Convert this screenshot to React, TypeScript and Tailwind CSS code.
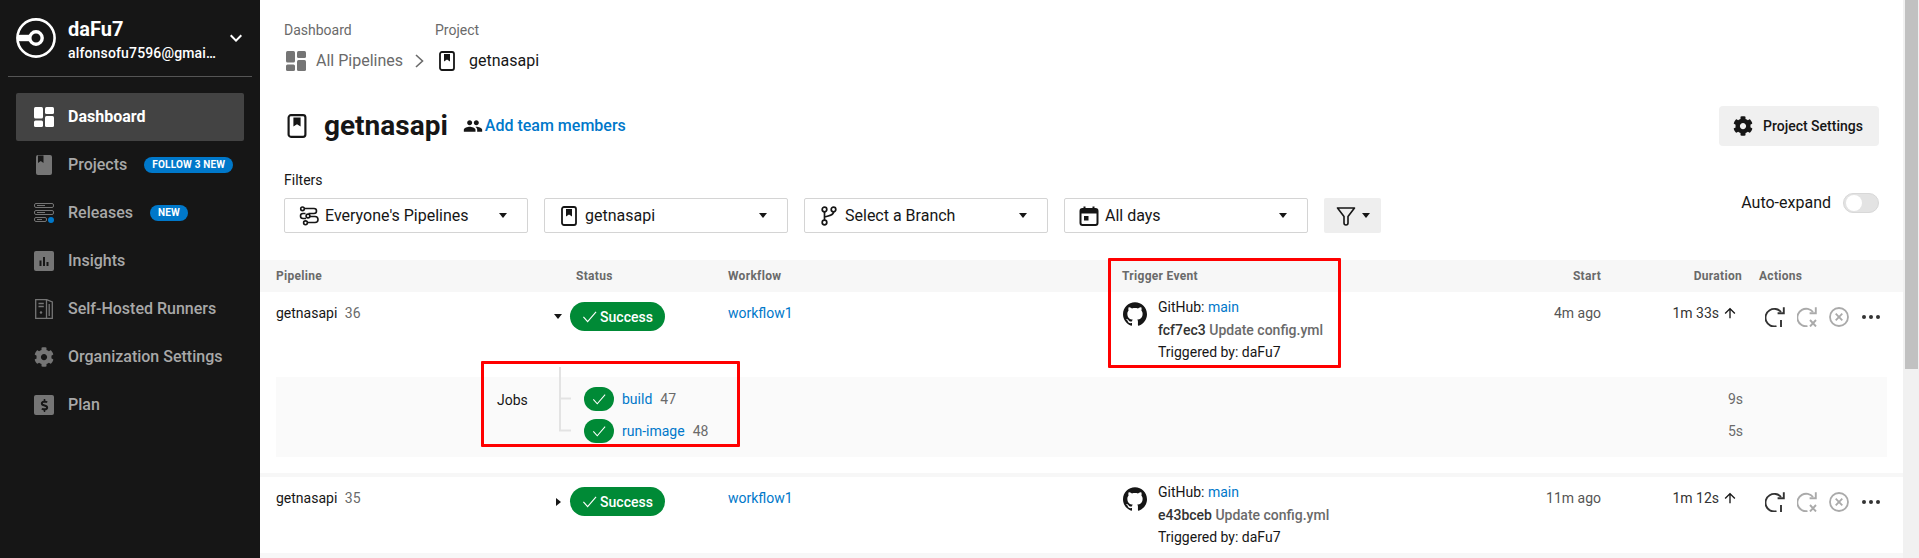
import React from "react";
import { FaCog, FaDollarSign } from "react-icons/fa";
import { MdPeople, MdArrowUpward, MdKeyboardArrowDown } from "react-icons/md";
import { SiGithub } from "react-icons/si";

const Logo = () => (
  <svg width="40" height="40" viewBox="0 0 40 40" fill="none" stroke="white">
    <circle cx="20" cy="20" r="18.6" strokeWidth="2.6" />
    <circle cx="20" cy="20" r="6.2" strokeWidth="3.4" />
    <path d="M2 20H15" strokeWidth="6.4" />
  </svg>
);

const DashIcon = ({ c }: { c: string }) => (
  <svg width="20" height="20" viewBox="0 0 20 20" fill={c}>
    <rect x="0" y="0" width="9" height="11.5" rx="1.5" />
    <rect x="11" y="0" width="9" height="7" rx="1.5" />
    <rect x="0" y="13.5" width="9" height="6.5" rx="1.5" />
    <rect x="11" y="9" width="9" height="11" rx="1.5" />
  </svg>
);

const BookSolid = () => (
  <svg width="20" height="20" viewBox="0 0 20 20">
    <rect x="2" y="0" width="16" height="20" rx="2" fill="#757575" />
    <path d="M4 0.5H9.5V8L6.75 6L4 8Z" fill="#161616" />
  </svg>
);

const BookOutline = ({ s = 20 }: { s?: number }) => (
  <svg width={s} height={s} viewBox="0 0 20 20" fill="none">
    <rect x="3" y="1" width="14" height="18" rx="2" stroke="#161616" strokeWidth="1.8" />
    <path d="M7 3H13V10.5L10 8.5L7 10.5Z" fill="#161616" />
  </svg>
);

const ReleaseIcon = () => (
  <svg width="20" height="20" viewBox="0 0 20 20" fill="none">
    <rect x="0.5" y="0.5" width="19" height="4" rx="1.5" stroke="#757575" />
    <rect x="0.5" y="7.5" width="19" height="4" rx="1.5" stroke="#757575" />
    <rect x="0.5" y="14.5" width="12" height="4" rx="1.5" stroke="#757575" />
    <path d="M3 2.5H11M3 9.5H11M3 16.5H8" stroke="#757575" />
    <circle cx="17" cy="17" r="3" fill="#0078ca" />
  </svg>
);

const InsightsIcon = () => (
  <svg width="20" height="20" viewBox="0 0 20 20">
    <rect width="20" height="20" rx="2" fill="#757575" />
    <path d="M5.5 9.5H7.5V15H5.5ZM9 6H11V15H9ZM12.5 11H14.5V15H12.5Z" fill="#161616" />
  </svg>
);

const RunnerIcon = () => (
  <svg width="20" height="20" viewBox="0 0 20 20" fill="none" stroke="#757575" strokeWidth="1.3">
    <path d="M1.7 0.7H12.5V19.3H1.7Z" />
    <path d="M12.5 0.7L18.3 3V19.3H12.5" />
    <path d="M4.5 4.5H9.8M4.5 7.5H9.8" />
    <path d="M15.2 5V17" />
    <circle cx="7" cy="13.5" r="1.2" fill="#757575" stroke="none" />
  </svg>
);

const PlanIcon = () => (
  <span className="flex h-5 w-5 items-center justify-center rounded-[2px] bg-[#757575] text-[#161616]">
    <FaDollarSign size={13} />
  </span>
);

const PipelinesIcon = () => (
  <svg width="20" height="20" viewBox="0 0 20 20" fill="none" stroke="#161616" strokeWidth="1.6">
    <path d="M5 2.5H15A2.5 2.5 0 0 1 15 7.5H9.5M6.5 7.5H4A2.5 2.5 0 0 0 4 12.5H7M11 10.5H16A3 3 0 0 1 16 16.5H8M5 16.5H4" />
    <circle cx="3.5" cy="2.8" r="1.8" />
    <circle cx="9" cy="10" r="1.9" />
    <circle cx="6.5" cy="16.8" r="1.9" />
  </svg>
);

const BranchIcon = () => (
  <svg width="20" height="20" viewBox="0 0 20 20" fill="none" stroke="#161616" strokeWidth="1.7">
    <circle cx="5.5" cy="3.5" r="2.3" />
    <circle cx="14.5" cy="3.5" r="2.3" />
    <circle cx="5.5" cy="16.5" r="2.3" />
    <path d="M5.5 6V14M14.5 6C14.5 9 10 10 5.5 11" />
  </svg>
);

const CalendarIcon = () => (
  <svg width="20" height="20" viewBox="0 0 20 20" fill="none">
    <rect x="1.5" y="3" width="17" height="16" rx="2" stroke="#161616" strokeWidth="2" />
    <path d="M1.5 3H18.5V7.5H1.5Z" fill="#161616" />
    <path d="M5.5 0.5V4M14.5 0.5V4" stroke="#161616" strokeWidth="2" />
    <rect x="5" y="10" width="4.5" height="4.5" fill="#161616" />
  </svg>
);

const Funnel = () => (
  <svg width="20" height="20" viewBox="0 0 20 20" fill="none" stroke="#161616" strokeWidth="1.6" strokeLinejoin="round">
    <path d="M1.5 2H18.5L12 10.5V17A1.5 1.5 0 0 1 8 17V10.5Z" />
  </svg>
);

const Caret = () => (
  <span className="block h-0 w-0 border-x-[4.5px] border-t-[5px] border-x-transparent border-t-[#161616]" />
);

const Retry = ({ c }: { c: string }) => (
  <svg width="20" height="20" viewBox="0 0 20 20" fill="none" stroke={c} strokeWidth="1.9">
    <path d="M16 5A8.8 8.8 0 1 0 11.5 19.2" />
    <path d="M18.8 0.2V6.2H12.6" />
    <path d="M16 13V20" />
  </svg>
);

const RerunFailed = () => (
  <svg width="20" height="20" viewBox="0 0 20 20" fill="none" stroke="#aaaaaa" strokeWidth="1.9">
    <path d="M16 5A8.8 8.8 0 1 0 10.5 19.2" />
    <path d="M18.8 0.2V6.2H12.6" />
    <path d="M13 13L19 19.5M19 13L13 19.5" />
  </svg>
);

const Cancel = () => (
  <svg width="20" height="20" viewBox="0 0 20 20" fill="none" stroke="#aaaaaa" strokeWidth="1.8">
    <circle cx="10" cy="10" r="9" />
    <path d="M6.7 6.7L13.3 13.3M13.3 6.7L6.7 13.3" />
  </svg>
);

const Dots = () => (
  <svg width="18" height="4" viewBox="0 0 18 4" fill="#333333">
    <circle cx="2" cy="2" r="2" />
    <circle cx="9" cy="2" r="2" />
    <circle cx="16" cy="2" r="2" />
  </svg>
);

const Thin = ({ s }: { s: number }) => (
  <svg width={s} height={s} viewBox="0 0 16 16" fill="none" stroke="white" strokeWidth="1.2">
    <path d="M1.5 8.5L6 13.5L15 3" />
  </svg>
);

const nav: { label: string; icon: React.ReactNode; badge?: string; active?: boolean }[] = [
  { label: "Dashboard", icon: <DashIcon c="#ffffff" />, active: true },
  { label: "Projects", icon: <BookSolid />, badge: "FOLLOW 3 NEW" },
  { label: "Releases", icon: <ReleaseIcon />, badge: "NEW" },
  { label: "Insights", icon: <InsightsIcon /> },
  { label: "Self-Hosted Runners", icon: <RunnerIcon /> },
  { label: "Organization Settings", icon: <FaCog size={20} color="#757575" /> },
  { label: "Plan", icon: <PlanIcon /> },
];

const Sidebar = () => (
  <aside className="flex w-[260px] shrink-0 flex-col bg-[#161616]">
    <div className="flex h-[76px] items-start pl-4 pt-[18px]">
      <Logo />
      <div className="ml-3 mt-[1px] w-[148px]">
        <div className="text-[20px] leading-[20px] font-bold text-white">daFu7</div>
        <div className="mt-[5px] truncate text-[14px] leading-[18px] font-medium tracking-[0.15px] text-white">
          alfonsofu7596@gmail.com
        </div>
      </div>
      <MdKeyboardArrowDown size={24} color="#ffffff" className="ml-2 mt-2" />
    </div>
    <div className="mx-2 h-px bg-[#555555]" />
    <nav className="mt-4 flex flex-col px-4">
      {nav.map((n) => (
        <div
          key={n.label}
          className={`flex h-12 items-center gap-[14px] rounded-[2px] pl-[18px] text-[16px] ${
            n.active ? "bg-[#434343] font-bold text-white" : "font-medium text-[#a8a8a8]"
          }`}
        >
          {n.icon}
          <span>{n.label}</span>
          {n.badge && (
            <span className="ml-[3px] whitespace-nowrap rounded-full bg-[#0078ca] px-2 text-[10px] leading-[16px] font-bold tracking-[0.2px] text-white">
              {n.badge}
            </span>
          )}
        </div>
      ))}
    </nav>
  </aside>
);

const FilterBox = ({ icon, label }: { icon: React.ReactNode; label: string }) => (
  <div className="flex h-[35px] w-[244px] items-center rounded-[2px] border border-[#d4d4d4] pl-[14px] pr-5 text-[16px] text-[#161616]">
    {icon}
    <span className="ml-[6px]">{label}</span>
    <span className="ml-auto flex">
      <Caret />
    </span>
  </div>
);

const rowGrid = "grid grid-cols-[272px_180px_394px_320px_159px_141px_1fr] px-4";

const Row = ({
  num,
  open,
  hash,
  start,
  dur,
}: {
  num: string;
  open: boolean;
  hash: string;
  start: string;
  dur: string;
}) => (
  <div className={`${rowGrid} text-[14px] leading-5 text-[#161616]`}>
    <div className="pt-[11px]">
      getnasapi <span className="ml-1 text-[#6a6a6a]">{num}</span>
    </div>
    <div className="flex items-start pt-[10px]">
      <span className="flex h-[29px] w-5 items-center justify-center">
        {open ? (
          <span className="h-0 w-0 border-x-[4.5px] border-t-[5px] border-x-transparent border-t-[#161616]" />
        ) : (
          <span className="h-0 w-0 border-y-[4.5px] border-l-[5px] border-y-transparent border-l-[#161616]" />
        )}
      </span>
      <span className="ml-[2px] flex h-[29px] w-[95px] items-center justify-center gap-[3px] rounded-full bg-[#008a36] font-medium text-white">
        <Thin s={15} />
        Success
      </span>
    </div>
    <div className="pt-[11px] text-[#0078ca]">workflow1</div>
    <div className="flex items-start pl-[1px] pt-[10px]">
      <SiGithub size={24} color="#161616" />
      <div className="ml-[11px] -mt-[6px] leading-[22.5px]">
        <div>
          GitHub: <span className="text-[#0078ca]">main</span>
        </div>
        <div className="font-medium text-[#333333]">
          {hash} <span className="text-[#6a6a6a]">Update config.yml</span>
        </div>
        <div>Triggered by: daFu7</div>
      </div>
    </div>
    <div className="pt-[11px] text-right text-[#555555]">{start}</div>
    <div className="pt-[11px] pr-1 text-[#333333]">
      <div className="flex items-center justify-end gap-[3px]">
        <span>{dur}</span>
        <MdArrowUpward size={16} color="#161616" />
      </div>
    </div>
    <div className="flex items-center gap-3 self-start pl-[23px] pt-[15px]">
      <Retry c="#333333" />
      <RerunFailed />
      <Cancel />
      <span className="ml-[1px] flex">
        <Dots />
      </span>
    </div>
  </div>
);

const Job = ({ name, num, dur }: { name: string; num: string; dur: string }) => (
  <div className="flex h-6 items-center text-[14px]">
    <span className="flex h-6 w-[30px] items-center justify-center rounded-full bg-[#008a36]">
      <Thin s={14} />
    </span>
    <span className="ml-2 text-[#0078ca]">{name}</span>
    <span className="ml-2 text-[#6a6a6a]">{num}</span>
    <span className="ml-auto pr-[144px] text-[#6a6a6a]">{dur}</span>
  </div>
);

const Main = () => (
  <main className="relative min-w-0 flex-1 overflow-hidden">
    <div className="px-6 pt-5">
      <div className="grid grid-cols-[151px_auto] text-[14px] leading-5 text-[#6a6a6a]">
        <span>Dashboard</span>
        <span>Project</span>
      </div>
      <div className="mt-[9px] flex h-6 items-center text-[16px]">
        <span className="ml-[2px]">
          <DashIcon c="#757575" />
        </span>
        <span className="ml-[10px] text-[#6a6a6a]">All Pipelines</span>
        <svg width="9" height="14" viewBox="0 0 9 14" fill="none" stroke="#6a6a6a" strokeWidth="1.6" className="ml-[12px]">
          <path d="M1 1L7.5 7L1 13" />
        </svg>
        <span className="ml-[13px]">
          <BookOutline />
        </span>
        <span className="ml-[12px] text-[#161616]">getnasapi</span>
      </div>
      <div className="mt-[33px] flex h-10 items-center">
        <span className="ml-[1px]">
          <BookOutline s={24} />
        </span>
        <h1 className="ml-[15px] text-[28px] font-bold text-[#161616]">getnasapi</h1>
        <MdPeople size={20} color="#161616" className="ml-[15px]" />
        <span className="ml-[2px] text-[16px] font-medium text-[#0078ca]">Add team members</span>
        <button className="ml-auto flex h-10 w-40 items-center rounded-[4px] bg-[#f0f0f0] pl-[14px] text-[14px] font-medium text-[#161616]">
          <FaCog size={20} color="#161616" />
          <span className="ml-[10px]">Project Settings</span>
        </button>
      </div>
      <div className="mt-6 flex items-start justify-between">
        <div>
          <div className="text-[14px] leading-5 text-[#161616]">Filters</div>
          <div className="mt-2 flex gap-4">
            <FilterBox icon={<PipelinesIcon />} label="Everyone's Pipelines" />
            <FilterBox icon={<BookOutline />} label="getnasapi" />
            <FilterBox icon={<BranchIcon />} label="Select a Branch" />
            <FilterBox icon={<CalendarIcon />} label="All days" />
            <button className="flex h-[35px] w-[57px] items-center justify-center gap-[6px] rounded-[2px] bg-[#eeeeee]">
              <Funnel />
              <Caret />
            </button>
          </div>
        </div>
        <div className="mt-[23px] flex h-5 items-center gap-3">
          <span className="text-[16px] text-[#161616]">Auto-expand</span>
          <span className="flex h-5 w-9 items-center rounded-full border border-[#d8d8d8] bg-[#e3e3e3] pl-[2px]">
            <span className="h-4 w-4 rounded-full bg-white" />
          </span>
        </div>
      </div>
    </div>

    <div className={`${rowGrid} mt-[27px] h-8 items-center bg-[#f7f7f7] text-[12px] font-bold tracking-[0.3px] text-[#6a6a6a]`}>
      <span>Pipeline</span>
      <span className="pl-7">Status</span>
      <span>Workflow</span>
      <span>Trigger Event</span>
      <span className="text-right">Start</span>
      <span className="text-right">Duration</span>
      <span className="pl-[17px]">Actions</span>
    </div>

    <div className="h-[85px]">
      <Row num="36" open hash="fcf7ec3" start="4m ago" dur="1m 33s" />
    </div>
    <div className="mx-4 flex h-20 bg-[#fafafa]">
      <div className="ml-[221px] mt-[13px] w-[62px] text-[14px] leading-5 text-[#161616]">Jobs</div>
      <svg width="12" height="65" viewBox="0 0 12 65" fill="none" stroke="#e3e3e3" strokeWidth="2" className="-mt-[10px] shrink-0">
        <path d="M1 0V63.5H12M1 31.5H12" />
      </svg>
      <div className="ml-[13px] flex flex-1 flex-col gap-2 pt-[10px]">
        <Job name="build" num="47" dur="9s" />
        <Job name="run-image" num="48" dur="5s" />
      </div>
    </div>
    <div className="mt-4 h-1 bg-[#f7f7f7]" />
    <div className="h-[76px]">
      <Row num="35" open={false} hash="e43bceb" start="11m ago" dur="1m 12s" />
    </div>
    <div className="h-[5px] bg-[#f7f7f7]" />

    <div className="absolute left-[848px] top-[258px] h-[110px] w-[233px] rounded-[1px] border-[3px] border-[#ff0000]" />
    <div className="absolute left-[221px] top-[361px] h-[86px] w-[259px] rounded-[1px] border-[3px] border-[#ff0000]" />
  </main>
);

export default function App() {
  return (
    <div className="flex h-[558px] w-full overflow-hidden bg-white font-['Roboto',sans-serif]">
      <Sidebar />
      <Main />
      <div className="h-full w-4 shrink-0 bg-[#f1f1f1] pl-[2px]">
        <div className="h-[369px] w-[13px] bg-[#c1c1c1]" />
      </div>
    </div>
  );
}
